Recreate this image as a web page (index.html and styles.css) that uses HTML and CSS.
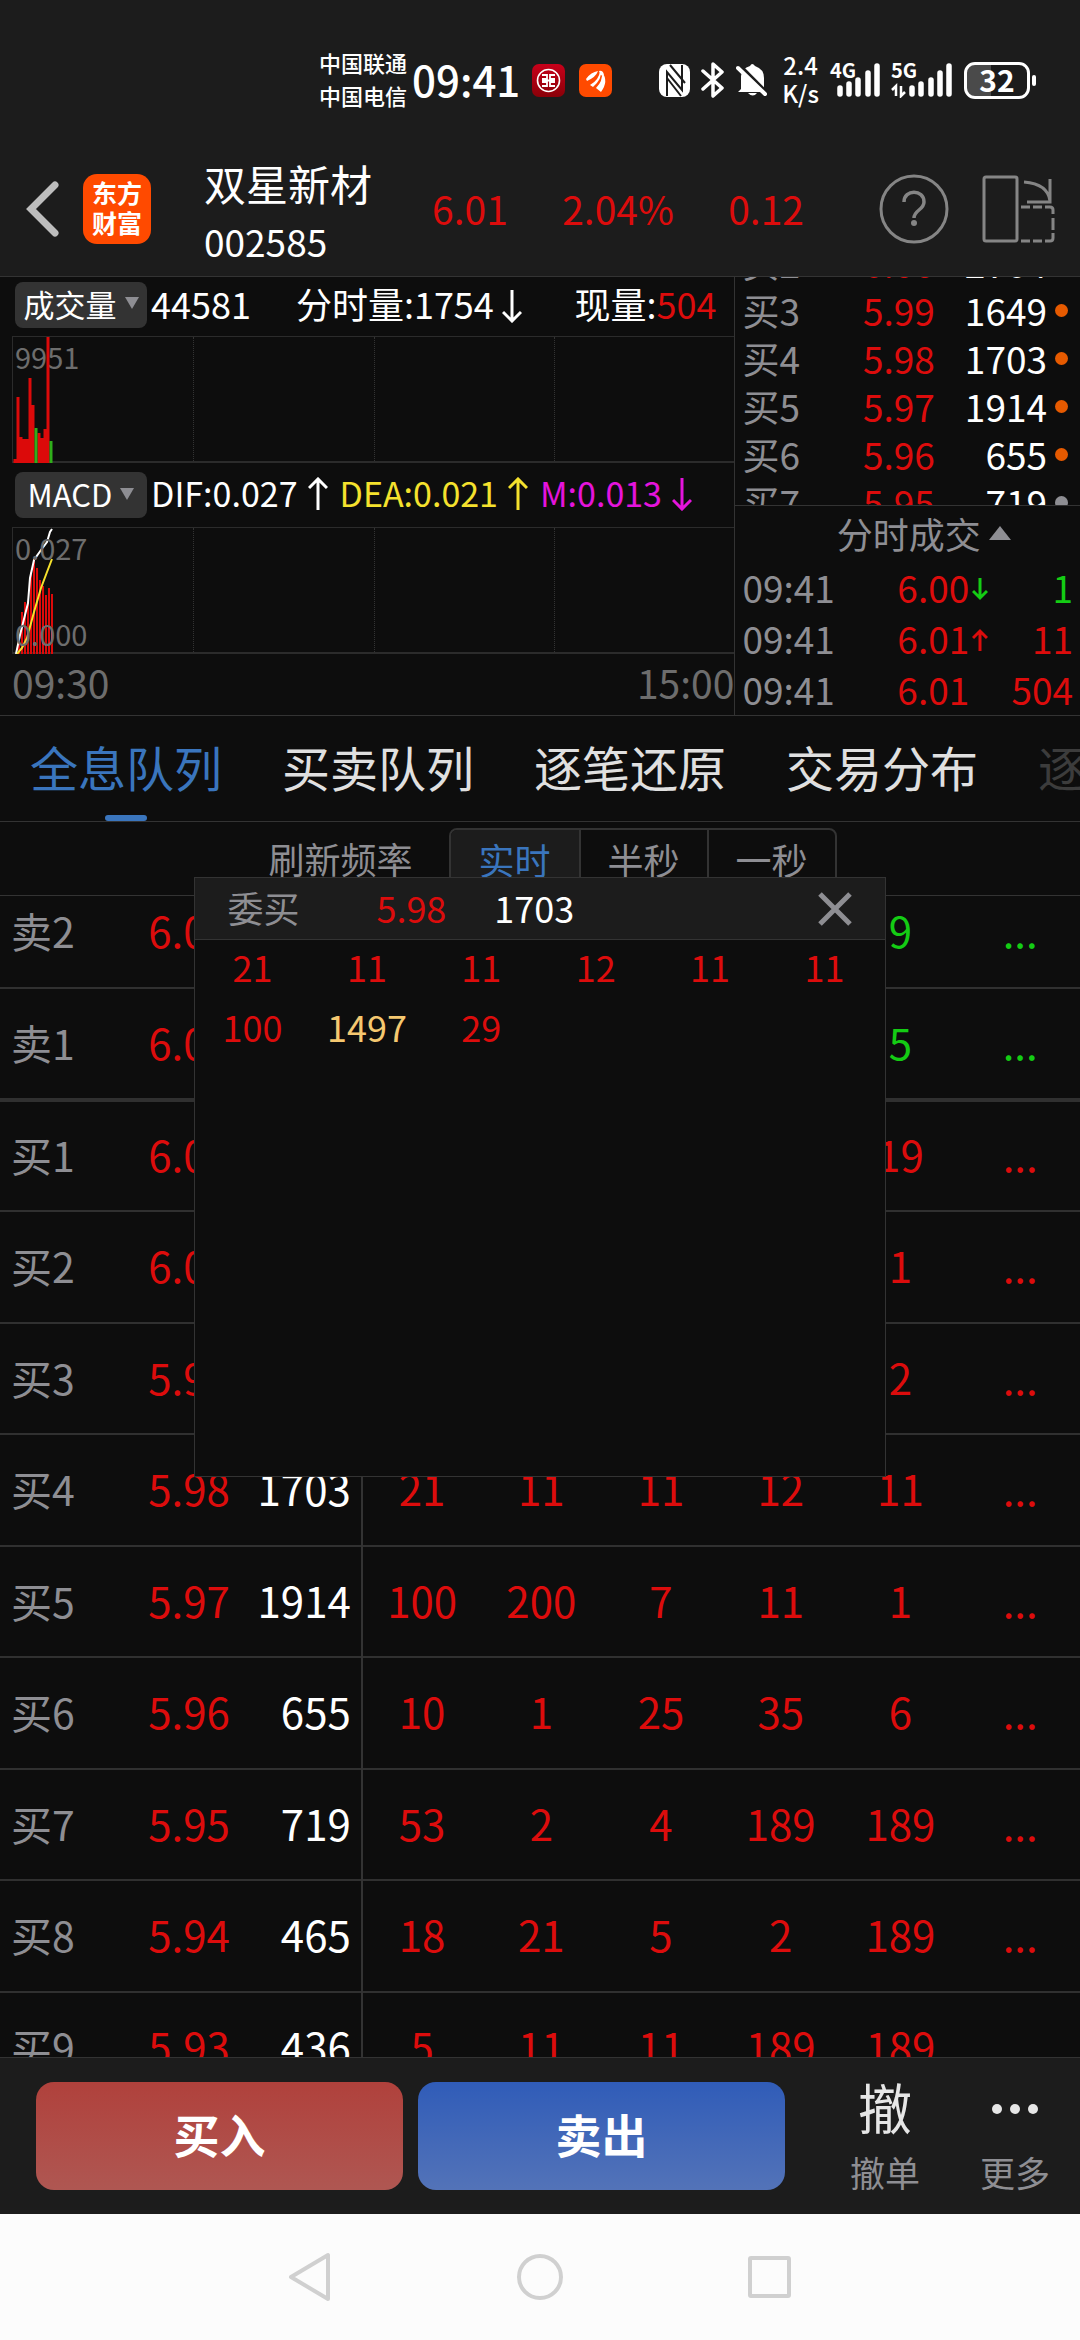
FILE: index.html
```html
<!DOCTYPE html>
<html lang="zh-CN">
<head>
  <meta charset="UTF-8" />
  <meta name="viewport" content="width=device-width, initial-scale=1.0"/>
  <title>双星新材 002585</title>
  <link rel="stylesheet" href="styles.css">
</head>
<body>

<!-- Status bar -->
<div class="status-bar">
  <div class="carriers">中国联通<br>中国电信</div>
  <div class="clock">09:41</div>
  <svg class="app-icon" width="33" height="33" viewBox="0 0 33 33">
    <defs><linearGradient id="bank" x1="0" y1="0" x2="0" y2="1"><stop offset="0" stop-color="#c8001a"/><stop offset="1" stop-color="#8a0008"/></linearGradient></defs>
    <rect width="33" height="33" rx="7" fill="url(#bank)"/>
    <circle cx="16.500" cy="16.500" r="11" fill="none" stroke="#fff" stroke-width="1.600"/>
    <path d="M10 11h5v4h-5M10 22h5v-4h-5M23 11h-5v4h5M23 22h-5v-4h5M10 16.500h13" fill="none" stroke="#fff" stroke-width="1.800"/>
  </svg>
  <svg class="app-icon" width="33" height="33" viewBox="0 0 33 33">
    <rect width="33" height="33" rx="7" fill="#ff4a00"/>
    <path d="M7 15q5-7 12-8-2 6-11 10zM11 21q9-5 10-14 3 7-7 16zM17 24q7-7 6-16 7 9-1 20zM20 7q4-1 5 4-2 2-4-1z" fill="#fff"/>
  </svg>
  <div class="status-icons">
    <svg width="31" height="33" viewBox="0 0 31 33">
      <rect width="31" height="33" rx="8" fill="#fff"/>
      <path d="M8 32V8l15 18V1M11 1l15 18M8 14l14 18" fill="none" stroke="#1c1c1c" stroke-width="2"/>
    </svg>
    <svg width="24" height="36" viewBox="0 0 24 36">
      <path d="M2 9l19 17-9 8V2l9 8L2 27" fill="none" stroke="#fff" stroke-width="3.500" stroke-linejoin="round" stroke-linecap="round"/>
    </svg>
    <svg width="32" height="36" viewBox="0 0 32 36">
      <path d="M5 27V14Q6 6 14 4q2-4 5 0 9 3 9 12v11l2 3H2zM12 31h9q-4 5-9 0z" fill="#fff"/>
      <path d="M2 2l31 31" stroke="#1c1c1c" stroke-width="4"/>
      <path d="M2 6l27 26" stroke="#fff" stroke-width="4" stroke-linecap="round"/>
    </svg>
    <div class="speed">2.4<br>K/s</div>
    <div class="signal">
      <span>4G</span>
      <svg width="50" height="36" viewBox="0 0 50 36">
        <path d="M10 26v6M19 22v10M28 18v14M38 11v21M47 4v28" stroke="#fff" stroke-width="5.500" stroke-linecap="round"/>
      </svg>
    </div>
    <div class="signal">
      <span>5G</span>
      <svg width="62" height="36" viewBox="0 0 62 36">
        <path d="M21 26v6M30 22v10M40 18v14M49 11v21M58 4v28" stroke="#fff" stroke-width="5.500" stroke-linecap="round"/>
        <path d="M1 28l4-4v10M10 24v10l4-4" fill="none" stroke="#fff" stroke-width="2.500"/>
      </svg>
    </div>
    <div class="battery"><span>32</span></div>
  </div>
</div>

<!-- Stock header -->
<header class="stock-header">
  <button class="back" aria-label="返回">
    <svg width="36" height="60" viewBox="0 0 36 60"><path d="M31 6L7 30l24 24" fill="none" stroke="#bdbdbd" stroke-width="7" stroke-linecap="round"/></svg>
  </button>
  <div class="brand">东方<br>财富</div>
  <div class="stock-name">
    <h1>双星新材</h1>
    <div>002585</div>
  </div>
  <div class="quote red"><span>6.01</span><span>2.04%</span><span>0.12</span></div>
  <button class="help" aria-label="帮助">
    <svg width="70" height="70" viewBox="0 0 70 70" fill="none" stroke="#858585">
      <circle cx="35" cy="35" r="33" stroke-width="3"/>
      <path d="M25 28c0-13 20-13 20 0 0 8-10 8-10 16" stroke-width="3.500"/>
      <circle cx="35" cy="49" r="3" fill="#858585" stroke="none"/>
    </svg>
  </button>
  <button class="rotate" aria-label="横屏">
    <svg width="74" height="68" viewBox="0 0 74 68" fill="none" stroke="#858585" stroke-width="3">
      <rect x="2" y="2" width="33" height="64" rx="2"/>
      <path d="M42 7q24 2 26 19M68 4v23H45"/>
      <path d="M39 32h9M51 32h9M63 32h5q3 0 3 3v4M71 43v12M71 58v5q0 3-3 3h-5M60 66h-9M48 66h-9"/>
    </svg>
  </button>
</header>

<!-- Charts and order book -->
<section class="market">
  <div class="charts">
    <div class="indicator">
      <button class="picker">成交量 <i></i></button>
      <span>44581</span>
      <span class="minute-volume">分时量:1754<svg class="arrow" viewBox="0 0 20 34"><path d="M10 1v31M1 23l9 9 9-9"/></svg></span>
      <span class="current">现量:<b class="red">504</b></span>
    </div>
    <div class="chart">
      <div></div><div></div><div></div><div></div>
      <span class="label-top">9951</span>
      <svg width="60" height="126" viewBox="0 0 60 126">
        <path d="M2 126v-4M5 126V60M8 126v-26M11 126v-24M14 126v-24M17 126V41M20 126V68M26 126V96M29 126v-25M32 126v-34M35 126V0" stroke="#dc0a0a" stroke-width="3"/>
        <path d="M23 126V91M38 126v-22" stroke="#2fae1a" stroke-width="3"/>
      </svg>
    </div>
    <div class="indicator macd">
      <button class="picker">MACD <i></i></button>
      <span>DIF:0.027<svg class="arrow" viewBox="0 0 20 34"><path d="M10 33V2M1 11l9-9 9 9"/></svg></span>
      <span class="yellow">DEA:0.021<svg class="arrow" viewBox="0 0 20 34"><path d="M10 33V2M1 11l9-9 9 9"/></svg></span>
      <span class="magenta">M:0.013<svg class="arrow" viewBox="0 0 20 34"><path d="M10 1v31M1 23l9 9 9-9"/></svg></span>
    </div>
    <div class="chart">
      <div></div><div></div><div></div><div></div>
      <svg width="60" height="126" viewBox="0 0 60 126">
        <path d="M6 126v-12M9 126V84M12 126V74M15 126V73M18 126V44M21 126V31M24 126V40M27 126V52M30 126V58M33 126V67M36 126V60M39 126V66" stroke="#dc0a0a" stroke-width="2"/>
        <path d="M3 126l4-19 5-20 3-12 2-25 4-18 7-10 6-8 3-10 2-3" fill="none" stroke="#fff" stroke-width="2"/>
        <path d="M4 126l5-6 5-10 7-26 7-24 6-16 5-13" fill="none" stroke="#f5e12d" stroke-width="2"/>
      </svg>
      <span class="label-top">0.027</span>
      <span class="label-bottom">0.000</span>
    </div>
    <div class="time-axis"><span>09:30</span><span>15:00</span></div>
  </div>

  <div class="book">
    <div class="book-levels">
      <table>
        <tr><th>买2</th><td class="red">6.00</td><td>2764</td><td></td></tr>
        <tr><th>买3</th><td class="red">5.99</td><td>1649</td><td><i class="dot"></i></td></tr>
        <tr><th>买4</th><td class="red">5.98</td><td>1703</td><td><i class="dot"></i></td></tr>
        <tr><th>买5</th><td class="red">5.97</td><td>1914</td><td><i class="dot"></i></td></tr>
        <tr><th>买6</th><td class="red">5.96</td><td>655</td><td><i class="dot"></i></td></tr>
        <tr><th>买7</th><td class="red">5.95</td><td>719</td><td><i class="dot gray"></i></td></tr>
      </table>
    </div>
    <button class="trades-title">分时成交 <i></i></button>
    <table class="trades">
      <tr><th>09:41</th><td class="red">6.00<svg class="tick green" viewBox="0 0 16 24"><path d="M8 1v20M1 14l7 7 7-7"/></svg></td><td class="green">1</td></tr>
      <tr><th>09:41</th><td class="red">6.01<svg class="tick" viewBox="0 0 16 24"><path d="M8 23V3M1 10l7-7 7 7"/></svg></td><td class="red">11</td></tr>
      <tr><th>09:41</th><td class="red">6.01</td><td class="red">504</td></tr>
    </table>
  </div>
</section>

<!-- Tabs -->
<nav class="tabs">
  <a href="#queue" class="active">全息队列</a>
  <a href="#orders">买卖队列</a>
  <a href="#ticks">逐笔还原</a>
  <a href="#spread">交易分布</a>
  <a href="#more" class="faded">逐</a>
</nav>

<!-- Queue -->
<main class="queue" id="queue">
  <div class="refresh">
    <span>刷新频率</span>
    <div class="segments">
      <button class="active">实时</button>
      <button>半秒</button>
      <button>一秒</button>
    </div>
  </div>

  <div class="queue-scroll">
    <table class="queue-table">
      <colgroup>
        <col class="col-label"><col class="col-price"><col class="col-total">
        <col><col><col><col><col><col>
      </colgroup>
      <tr class="sell"><th>卖2</th><td>6.03</td><td></td><td></td><td></td><td></td><td></td><td>9</td><td>...</td></tr>
      <tr class="sell last-sell"><th>卖1</th><td>6.02</td><td></td><td></td><td></td><td></td><td></td><td>5</td><td>...</td></tr>
      <tr><th>买1</th><td>6.01</td><td></td><td></td><td></td><td></td><td></td><td>19</td><td>...</td></tr>
      <tr><th>买2</th><td>6.00</td><td></td><td></td><td></td><td></td><td></td><td>1</td><td>...</td></tr>
      <tr><th>买3</th><td>5.99</td><td></td><td></td><td></td><td></td><td></td><td>2</td><td>...</td></tr>
      <tr><th>买4</th><td>5.98</td><td>1703</td><td>21</td><td>11</td><td>11</td><td>12</td><td>11</td><td>...</td></tr>
      <tr><th>买5</th><td>5.97</td><td>1914</td><td>100</td><td>200</td><td>7</td><td>11</td><td>1</td><td>...</td></tr>
      <tr><th>买6</th><td>5.96</td><td>655</td><td>10</td><td>1</td><td>25</td><td>35</td><td>6</td><td>...</td></tr>
      <tr><th>买7</th><td>5.95</td><td>719</td><td>53</td><td>2</td><td>4</td><td>189</td><td>189</td><td>...</td></tr>
      <tr><th>买8</th><td>5.94</td><td>465</td><td>18</td><td>21</td><td>5</td><td>2</td><td>189</td><td>...</td></tr>
      <tr><th>买9</th><td>5.93</td><td>436</td><td>5</td><td>11</td><td>11</td><td>189</td><td>189</td><td></td></tr>
    </table>
  </div>

  <!-- Order detail popup -->
  <div class="popup" role="dialog" aria-label="委买">
    <div class="popup-header">
      <span class="side">委买</span>
      <span class="red">5.98</span>
      <span class="total">1703</span>
      <button aria-label="关闭">
        <svg width="36" height="36" viewBox="0 0 36 36"><path d="M3 3l30 30M33 3L3 33" stroke="#8e8e93" stroke-width="5"/></svg>
      </button>
    </div>
    <div class="popup-grid red">
      <span>21</span><span>11</span><span>11</span><span>12</span><span>11</span><span>11</span>
      <span>100</span><span class="big">1497</span><span>29</span>
    </div>
  </div>
</main>

<!-- Trade bar -->
<footer class="trade-bar">
  <button class="buy">买入</button>
  <button class="sell-btn">卖出</button>
  <button class="action"><span class="cancel-icon">撤</span>撤单</button>
  <button class="action">
    <svg width="54" height="54" viewBox="0 0 54 54" fill="#e6e6e6"><circle cx="9" cy="27" r="5"/><circle cx="27" cy="27" r="5"/><circle cx="45" cy="27" r="5"/></svg>
    更多
  </button>
</footer>

<!-- System navigation -->
<div class="system-nav">
  <svg width="50" height="50" viewBox="0 0 50 50"><path d="M42 3v44L5 25z"/></svg>
  <svg width="50" height="50" viewBox="0 0 50 50"><circle cx="25" cy="25" r="21"/></svg>
  <svg width="50" height="50" viewBox="0 0 50 50"><rect x="6" y="6" width="39" height="38" rx="1"/></svg>
</div>

</body>
</html>
```

FILE: styles.css
```css
* {
  box-sizing: border-box;
}

body {
  display: flex;
  flex-direction: column;
  height: 100vh;
  margin: 0;
  overflow: hidden;
  background: #0d0d0d;
  color: #fff;
  font-family: "Noto Sans CJK SC", sans-serif;
  font-size: 36px;
  line-height: 48px;
}

button {
  padding: 0;
  border: none;
  background: none;
  color: inherit;
  font: inherit;
  cursor: pointer;
}

svg {
  display: block;
}

table {
  width: 100%;
  border-collapse: collapse;
  table-layout: fixed;
}

th,
td {
  padding: 0;
  font-weight: normal;
}

th {
  color: #8e8e93;
  text-align: left;
}

.red {
  color: #dc0c0c;
}

.green {
  color: #14cc14;
}

.yellow {
  color: #f5e12d;
}

.magenta {
  color: #e414dc;
}

/* Status bar */
.status-bar {
  display: flex;
  align-items: center;
  height: 142px;
  padding: 18px 43px 0 319px;
  background: #1c1c1c;
}

.carriers {
  padding-bottom: 3px;
  font-size: 22px;
  font-weight: 500;
  line-height: 33px;
}

.clock {
  margin: 0 12px 0 5px;
  padding-bottom: 3px;
  font-size: 42px;
  font-weight: 500;
}

.app-icon {
  margin-right: 14px;
}

.status-icons {
  display: flex;
  align-items: center;
  gap: 11px;
  margin-left: auto;
}

.speed {
  margin-left: 3px;
  padding-bottom: 3px;
  font-size: 24px;
  font-weight: 500;
  line-height: 28px;
  text-align: center;
}

.signal {
  position: relative;
}

.signal span {
  position: absolute;
  top: -6px;
  left: 0;
  font-size: 20px;
  font-weight: 700;
  line-height: 28px;
}

.battery {
  position: relative;
  width: 66px;
  height: 37px;
  margin-right: 7px;
  border: 3px solid #fff;
  border-radius: 11px;
  background: linear-gradient(to right, #4a4a4a 40%, #1c1c1c 40%);
  font-size: 30px;
  font-weight: 700;
  line-height: 28px;
  text-align: center;
}

.battery::after {
  content: "";
  position: absolute;
  top: 10px;
  right: -9px;
  width: 4px;
  height: 11px;
  border-radius: 2px;
  background: #fff;
}

/* Stock header */
.stock-header {
  display: flex;
  align-items: center;
  height: 135px;
  padding: 0 24px;
  border-bottom: 1px solid #333;
  background: #1c1c1c;
}

.brand {
  width: 68px;
  height: 70px;
  margin-left: 23px;
  padding-top: 3px;
  border-radius: 14px;
  background: #ff4a00;
  font-size: 25px;
  font-weight: 700;
  line-height: 30px;
  text-align: center;
}

.stock-name {
  width: 170px;
  margin-left: 53px;
  padding-top: 6px;
  font-size: 37px;
  line-height: 58px;
}

.stock-name h1 {
  margin: 0;
  font-size: 42px;
  font-weight: 400;
  line-height: 58px;
}

.quote {
  display: flex;
  flex: 1;
  justify-content: space-between;
  margin: 0 75px 0 58px;
  padding-bottom: 2px;
  font-size: 39px;
}

.help {
  margin-right: 33px;
}

/* Charts */
.market {
  display: flex;
  height: 439px;
  border-bottom: 1px solid #333;
}

.charts {
  width: 68%;
  padding-left: 12px;
}

.indicator {
  display: flex;
  align-items: center;
  height: 59px;
  padding: 0 18px 4px 3px;
}

.indicator > span {
  padding-bottom: 4px;
}

.macd {
  height: 64px;
  gap: 4px;
  padding: 0 0 0 3px;
  font-size: 34px;
}

.picker {
  display: flex;
  flex: none;
  align-items: center;
  justify-content: center;
  gap: 8px;
  width: 132px;
  height: 46px;
  margin-right: 4px;
  padding-bottom: 3px;
  border-radius: 8px;
  background: #333;
  font-size: 31px;
  line-height: 43px;
}

.macd .picker {
  margin-right: 0;
}

.picker i {
  border: 7px solid transparent;
  border-top: 12px solid #8e8e93;
  border-bottom: none;
}

.minute-volume {
  margin-left: 45px;
}

.current {
  margin-left: auto;
}

.current b {
  font-weight: 400;
}

.arrow {
  display: inline-block;
  width: 20px;
  height: 34px;
  margin: 0 2px 0 8px;
  fill: none;
  stroke: currentColor;
  stroke-width: 3;
  vertical-align: -4px;
}

.macd .arrow {
  margin: 0 8px 0 10px;
}

.chart {
  position: relative;
  display: grid;
  grid-template-columns: repeat(4, 1fr);
  height: 127px;
  border: 1px solid #2b2b2b;
  border-width: 1px 0 2px 1px;
}

.chart div + div {
  border-left: 1px dotted #333;
}

.chart svg {
  position: absolute;
  top: 0;
  left: 0;
}

.label-top,
.label-bottom {
  position: absolute;
  left: 2px;
  color: #6d6d6d;
  font-size: 29px;
  line-height: 38px;
}

.label-top {
  top: 0;
}

.label-bottom {
  bottom: 0;
}

.time-axis {
  display: flex;
  justify-content: space-between;
  color: #6d6d6d;
  font-size: 39px;
  line-height: 56px;
}

/* Order book */
.book {
  width: 32%;
  border-left: 1px solid #333;
  font-size: 37px;
  line-height: 44px;
}

.book-levels {
  height: 229px;
  overflow: hidden;
  border-bottom: 1px solid #333;
}

.book-levels table {
  margin-top: -37px;
}

.book-levels tr {
  height: 48px;
}

.book th,
.book td {
  padding-bottom: 4px;
}

.book th {
  width: 37%;
  padding-left: 7px;
}

.book-levels td:nth-child(2) {
  width: 24%;
}

.book-levels td:nth-child(3) {
  text-align: right;
}

.book-levels td:last-child {
  width: 33px;
}

.dot {
  display: block;
  width: 13px;
  height: 13px;
  margin-left: 8px;
  border-radius: 50%;
  background: #e65a00;
}

.dot.gray {
  background: #8e8e93;
}

.trades-title {
  display: flex;
  align-items: center;
  justify-content: center;
  gap: 8px;
  width: 100%;
  height: 57px;
  padding: 0 0 4px 32px;
  color: #8e8e93;
  font-size: 36px;
}

.trades-title i {
  border: 11px solid transparent;
  border-top: none;
  border-bottom: 14px solid #8e8e93;
}

.trades tr {
  height: 51px;
}

.trades th {
  width: 47%;
}

.trades td:last-child {
  width: 22%;
  padding-right: 7px;
  text-align: right;
}

.tick {
  display: inline-block;
  width: 16px;
  height: 24px;
  margin-left: 3px;
  fill: none;
  stroke: currentColor;
  stroke-width: 3;
  vertical-align: 2px;
}

/* Tabs */
.tabs {
  display: flex;
  gap: 60px;
  height: 106px;
  padding-left: 30px;
  overflow: hidden;
  border-bottom: 1px solid #333;
  font-size: 48px;
  line-height: 100px;
  white-space: nowrap;
}

.tabs a {
  position: relative;
  flex: none;
  color: #e0e0e0;
  text-decoration: none;
}

.tabs a.active {
  color: #3a75bd;
}

.tabs a.active::after {
  content: "";
  position: absolute;
  bottom: 0;
  left: 50%;
  width: 42px;
  height: 6px;
  margin-left: -21px;
  border-radius: 3px;
  background: #3a75bd;
}

.tabs a.faded {
  color: #3c3c3c;
}

/* Queue */
.queue {
  position: relative;
  display: flex;
  flex: 1;
  flex-direction: column;
  min-height: 0;
}

.refresh {
  display: flex;
  flex: none;
  justify-content: center;
  gap: 36px;
  height: 74px;
  padding: 6px 0 0 25px;
  border-bottom: 1px solid #333;
  color: #8e8e93;
  line-height: 60px;
}

.segments {
  display: flex;
  height: 62px;
  border: 2px solid #333;
  border-radius: 8px;
  overflow: hidden;
}

.segments button {
  width: 128px;
  line-height: 56px;
}

.segments button + button {
  border-left: 2px solid #333;
}

.segments .active {
  background: #1c1c1c;
  color: #3a75bd;
}

.queue-scroll {
  flex: 1;
  min-height: 0;
  overflow: hidden;
}

.queue-table {
  margin-top: -19px;
  color: #dc0c0c;
  font-size: 42px;
  text-align: center;
}

.col-label {
  width: 13%;
}

.col-price {
  width: 9%;
}

.col-total {
  width: 11.5%;
}

.queue-table tr {
  height: 111px;
  border-bottom: 2px solid #303030;
}

.queue-table tr:nth-child(even) {
  height: 112px;
}

.queue-table .last-sell {
  border-bottom-width: 4px;
}

.queue-table th,
.queue-table td {
  padding-bottom: 4px;
}

.queue-table th {
  padding-left: 11px;
  font-size: 41px;
}

.queue-table td:nth-child(3) {
  padding-right: 10px;
  border-right: 2px solid #333;
  color: #fff;
  text-align: right;
}

.sell td:nth-child(n+4) {
  color: #14cc14;
}

/* Popup */
.popup {
  position: absolute;
  top: 55px;
  left: 18%;
  width: 64%;
  height: 600px;
  border: 1px solid #333;
  background: #0d0d0d;
}

.popup-header {
  display: flex;
  align-items: center;
  height: 62px;
  padding: 0 32px;
  border-bottom: 1px solid #333;
  background: #1c1c1c;
}

.popup-header span {
  padding-bottom: 4px;
}

.side {
  margin-right: 77px;
  color: #8e8e93;
}

.total {
  margin-left: 48px;
}

.popup-header button {
  margin-left: auto;
}

.popup-grid {
  display: grid;
  grid-template-columns: repeat(6, 1fr);
  grid-auto-rows: 60px;
  padding-right: 3px;
  line-height: 52px;
  text-align: center;
}

.big {
  color: #f5c870;
}

/* Trade bar */
.trade-bar {
  display: flex;
  flex: none;
  height: 157px;
  padding: 24px 0 0 36px;
  border-top: 1px solid #333;
  background: #1c1c1c;
}

.buy,
.sell-btn {
  flex: 1;
  height: 108px;
  margin-right: 15px;
  padding-bottom: 6px;
  border-radius: 18px;
  font-size: 46px;
  font-weight: 700;
}

.buy {
  background: linear-gradient(#b0413c, #af5752);
}

.sell-btn {
  margin-right: 35px;
  background: linear-gradient(#305cb8, #5373b8);
}

.action {
  display: flex;
  flex-direction: column;
  align-items: center;
  gap: 12px;
  width: 130px;
  color: #8e8e93;
  font-size: 35px;
  line-height: 48px;
}

.action svg {
  flex: none;
}

.cancel-icon {
  height: 54px;
  color: #e6e6e6;
  font-size: 54px;
  line-height: 50px;
}

/* System navigation */
.system-nav {
  display: flex;
  flex: none;
  align-items: center;
  justify-content: center;
  gap: 179px;
  height: 126px;
  background: #fcfcfc;
}

.system-nav svg {
  fill: none;
  stroke: #d0d0d0;
  stroke-width: 4;
  stroke-linejoin: round;
}
```
